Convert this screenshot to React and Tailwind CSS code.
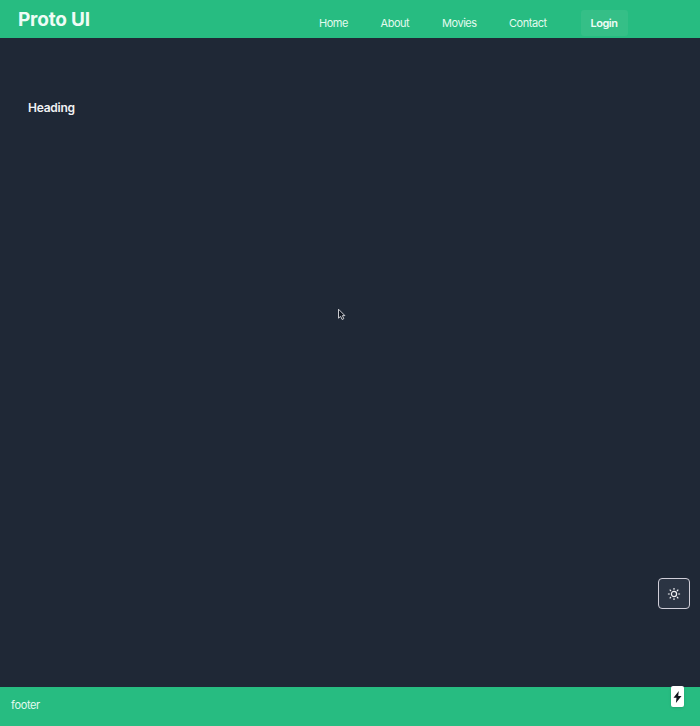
const links = ["Home", "About", "Movies", "Contact"];
const widths = ["w-[61.5px]", "w-[61.5px]", "w-[67px]", "w-[72px]"];

function Header() {
  return (
    <header className="flex h-[38px] w-full items-start bg-[#27bc81] pl-[18px]">
      <h1 className="w-[301px] pt-[6px] text-[19px] leading-[27px] font-bold tracking-[-0.2px] text-[#effcf6]">Proto UI</h1>
      <nav className="flex items-start pt-[10px]">
        {links.map((label, i) => (
          <a key={label} className={`${widths[i]} text-[11px] leading-[27px] tracking-[-0.45px] text-[#e3faef]`}>
            {label}
          </a>
        ))}
        <button className="h-[26px] w-[47px] rounded-[3px] bg-[#35bf87] pr-[1px] text-[11px] leading-[27px] font-semibold tracking-[-0.45px] text-[#effcf6]">
          Login
        </button>
      </nav>
    </header>
  );
}

function ThemeToggle() {
  return (
    <button className="absolute top-[578px] left-[658px] flex h-[31px] w-8 items-center justify-center rounded-[4px] border border-[#d0ced8] bg-[#2b3443] text-[#f0f0f3]">
      <svg width="14" height="14" viewBox="0 0 14 14" fill="none" stroke="currentColor" strokeWidth="1.2">
        <circle cx="7" cy="7" r="2.6" />
        <path d="M7 .9v1.9M7 11.2v1.9M.9 7h1.9M11.2 7h1.9M2.7 2.7 4 4M10 10l1.3 1.3M2.7 11.3 4 10M10 4l1.3-1.3" />
      </svg>
    </button>
  );
}

function Badge() {
  return (
    <div className="absolute top-[686px] left-[671px] flex h-[21px] w-[13px] items-center justify-center rounded-[2px] bg-white shadow-sm">
      <svg width="9" height="12" viewBox="0 0 9 12" fill="#10131b">
        <path d="M5.8 0 .5 6.8h3L2.9 12 8.5 5H5.2Z" />
      </svg>
    </div>
  );
}

function Cursor() {
  return (
    <svg className="absolute top-[308px] left-[337px]" width="10" height="13" viewBox="0 0 10 13">
      <path d="M1.5 1.2v9l2.1-1.9 1.5 3.2 1.7-.8-1.4-3.1h2.5Z" fill="#111722" stroke="#dcdee2" strokeWidth=".9" />
    </svg>
  );
}

export default function App() {
  return (
    <div className="relative flex h-[726px] w-[700px] flex-col overflow-hidden bg-[#1f2836] font-['Inter','Liberation_Sans',sans-serif]">
      <Header />
      <main className="flex-1 pt-[60px] pl-[28px]">
        <h2 className="text-[12px] leading-[20px] font-semibold tracking-[-0.25px] text-[#f1f2f4]">Heading</h2>
      </main>
      <footer className="h-[39px] bg-[#27bc81] pl-[11px] text-[11px] leading-[37px] tracking-[-0.35px] text-[#e3faef]">footer</footer>
      <Cursor />
      <ThemeToggle />
      <Badge />
    </div>
  );
}
